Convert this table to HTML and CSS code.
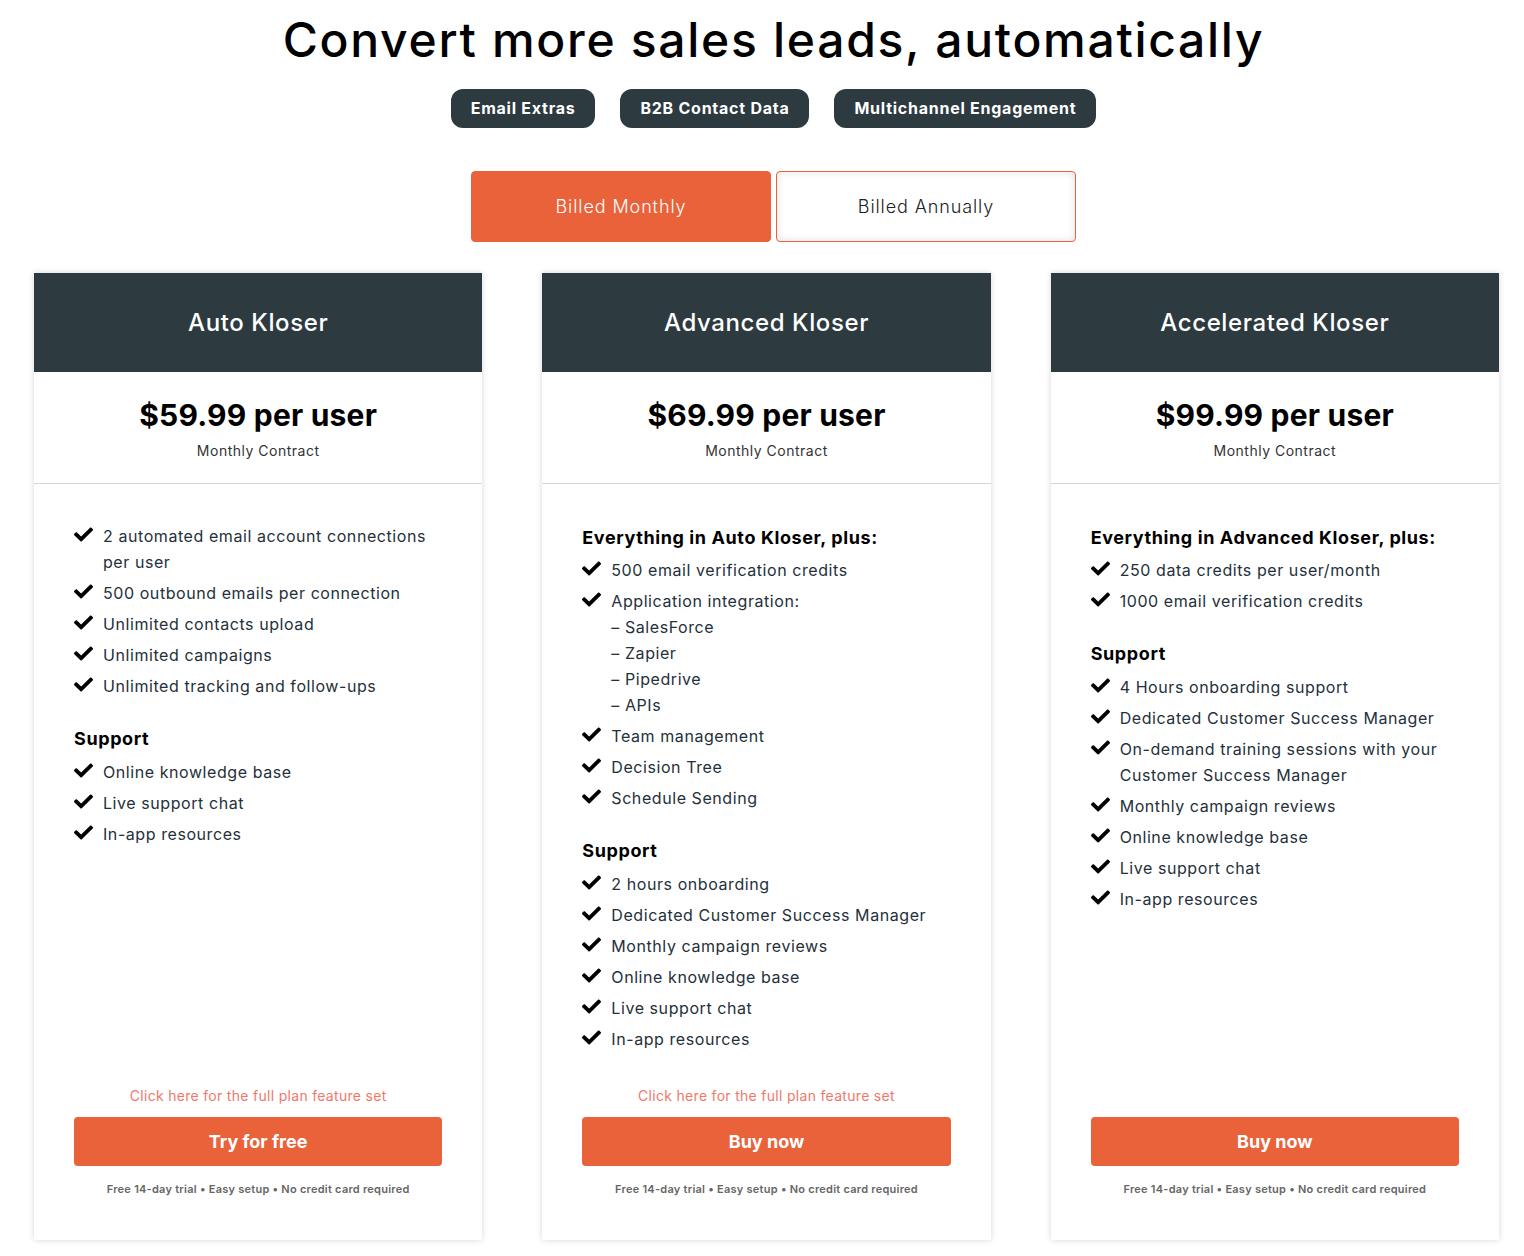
FILE: index.html
```html
<!DOCTYPE html>
<html lang="en">
<head>
<meta charset="utf-8">
<title>Pricing</title>
<link rel="stylesheet" href="styles.css">
</head>
<body>
<header class="hero">
  <h1 class="hero-title">Convert more sales leads, automatically</h1>
  <nav class="pills">
    <a class="pill" href="#">Email Extras</a>
    <a class="pill" href="#">B2B Contact Data</a>
    <a class="pill" href="#">Multichannel Engagement</a>
  </nav>
  <div class="billing-toggle">
    <button class="toggle-btn is-active">Billed Monthly</button>
    <button class="toggle-btn">Billed Annually</button>
  </div>
</header>

<main class="plans">
  <article class="plan">
    <div class="plan-head"><h2 class="plan-name">Auto Kloser</h2></div>
    <div class="plan-price">
      <p class="price">$59.99 per user</p>
      <p class="term">Monthly Contract</p>
    </div>
    <div class="plan-features">
      <ul class="feature-list">
        <li><svg class="check" viewBox="0 0 512 512"><path d="M173.9 439.4l-166.4-166.4c-10-10-10-26.2 0-36.2l36.2-36.2c10-10 26.2-10 36.2 0L192 312.7 432.1 72.6c10-10 26.2-10 36.2 0l36.2 36.2c10 10 10 26.2 0 36.2l-294.4 294.4c-10 10-26.2 10-36.2 0z"/></svg><span>2 automated email account connections per user</span></li>
        <li><svg class="check" viewBox="0 0 512 512"><path d="M173.9 439.4l-166.4-166.4c-10-10-10-26.2 0-36.2l36.2-36.2c10-10 26.2-10 36.2 0L192 312.7 432.1 72.6c10-10 26.2-10 36.2 0l36.2 36.2c10 10 10 26.2 0 36.2l-294.4 294.4c-10 10-26.2 10-36.2 0z"/></svg><span>500 outbound emails per connection</span></li>
        <li><svg class="check" viewBox="0 0 512 512"><path d="M173.9 439.4l-166.4-166.4c-10-10-10-26.2 0-36.2l36.2-36.2c10-10 26.2-10 36.2 0L192 312.7 432.1 72.6c10-10 26.2-10 36.2 0l36.2 36.2c10 10 10 26.2 0 36.2l-294.4 294.4c-10 10-26.2 10-36.2 0z"/></svg><span>Unlimited contacts upload</span></li>
        <li><svg class="check" viewBox="0 0 512 512"><path d="M173.9 439.4l-166.4-166.4c-10-10-10-26.2 0-36.2l36.2-36.2c10-10 26.2-10 36.2 0L192 312.7 432.1 72.6c10-10 26.2-10 36.2 0l36.2 36.2c10 10 10 26.2 0 36.2l-294.4 294.4c-10 10-26.2 10-36.2 0z"/></svg><span>Unlimited campaigns</span></li>
        <li><svg class="check" viewBox="0 0 512 512"><path d="M173.9 439.4l-166.4-166.4c-10-10-10-26.2 0-36.2l36.2-36.2c10-10 26.2-10 36.2 0L192 312.7 432.1 72.6c10-10 26.2-10 36.2 0l36.2 36.2c10 10 10 26.2 0 36.2l-294.4 294.4c-10 10-26.2 10-36.2 0z"/></svg><span>Unlimited tracking and follow-ups</span></li>
      </ul>
      <h3 class="feature-heading">Support</h3>
      <ul class="feature-list">
        <li><svg class="check" viewBox="0 0 512 512"><path d="M173.9 439.4l-166.4-166.4c-10-10-10-26.2 0-36.2l36.2-36.2c10-10 26.2-10 36.2 0L192 312.7 432.1 72.6c10-10 26.2-10 36.2 0l36.2 36.2c10 10 10 26.2 0 36.2l-294.4 294.4c-10 10-26.2 10-36.2 0z"/></svg><span>Online knowledge base</span></li>
        <li><svg class="check" viewBox="0 0 512 512"><path d="M173.9 439.4l-166.4-166.4c-10-10-10-26.2 0-36.2l36.2-36.2c10-10 26.2-10 36.2 0L192 312.7 432.1 72.6c10-10 26.2-10 36.2 0l36.2 36.2c10 10 10 26.2 0 36.2l-294.4 294.4c-10 10-26.2 10-36.2 0z"/></svg><span>Live support chat</span></li>
        <li><svg class="check" viewBox="0 0 512 512"><path d="M173.9 439.4l-166.4-166.4c-10-10-10-26.2 0-36.2l36.2-36.2c10-10 26.2-10 36.2 0L192 312.7 432.1 72.6c10-10 26.2-10 36.2 0l36.2 36.2c10 10 10 26.2 0 36.2l-294.4 294.4c-10 10-26.2 10-36.2 0z"/></svg><span>In-app resources</span></li>
      </ul>
    </div>
    <div class="plan-footer">
      <div class="plan-link-row"><a class="plan-link" href="#">Click here for the full plan feature set</a></div>
      <a class="plan-cta" href="#">Try for free</a>
      <p class="plan-note">Free 14-day trial • Easy setup • No credit card required</p>
    </div>
  </article>

  <article class="plan">
    <div class="plan-head"><h2 class="plan-name">Advanced Kloser</h2></div>
    <div class="plan-price">
      <p class="price">$69.99 per user</p>
      <p class="term">Monthly Contract</p>
    </div>
    <div class="plan-features">
      <h3 class="feature-heading is-first">Everything in Auto Kloser, plus:</h3>
      <ul class="feature-list">
        <li><svg class="check" viewBox="0 0 512 512"><path d="M173.9 439.4l-166.4-166.4c-10-10-10-26.2 0-36.2l36.2-36.2c10-10 26.2-10 36.2 0L192 312.7 432.1 72.6c10-10 26.2-10 36.2 0l36.2 36.2c10 10 10 26.2 0 36.2l-294.4 294.4c-10 10-26.2 10-36.2 0z"/></svg><span>500 email verification credits</span></li>
        <li><svg class="check" viewBox="0 0 512 512"><path d="M173.9 439.4l-166.4-166.4c-10-10-10-26.2 0-36.2l36.2-36.2c10-10 26.2-10 36.2 0L192 312.7 432.1 72.6c10-10 26.2-10 36.2 0l36.2 36.2c10 10 10 26.2 0 36.2l-294.4 294.4c-10 10-26.2 10-36.2 0z"/></svg><span>Application integration:<br>– SalesForce<br>– Zapier<br>– Pipedrive<br>– APIs</span></li>
        <li><svg class="check" viewBox="0 0 512 512"><path d="M173.9 439.4l-166.4-166.4c-10-10-10-26.2 0-36.2l36.2-36.2c10-10 26.2-10 36.2 0L192 312.7 432.1 72.6c10-10 26.2-10 36.2 0l36.2 36.2c10 10 10 26.2 0 36.2l-294.4 294.4c-10 10-26.2 10-36.2 0z"/></svg><span>Team management</span></li>
        <li><svg class="check" viewBox="0 0 512 512"><path d="M173.9 439.4l-166.4-166.4c-10-10-10-26.2 0-36.2l36.2-36.2c10-10 26.2-10 36.2 0L192 312.7 432.1 72.6c10-10 26.2-10 36.2 0l36.2 36.2c10 10 10 26.2 0 36.2l-294.4 294.4c-10 10-26.2 10-36.2 0z"/></svg><span>Decision Tree</span></li>
        <li><svg class="check" viewBox="0 0 512 512"><path d="M173.9 439.4l-166.4-166.4c-10-10-10-26.2 0-36.2l36.2-36.2c10-10 26.2-10 36.2 0L192 312.7 432.1 72.6c10-10 26.2-10 36.2 0l36.2 36.2c10 10 10 26.2 0 36.2l-294.4 294.4c-10 10-26.2 10-36.2 0z"/></svg><span>Schedule Sending</span></li>
      </ul>
      <h3 class="feature-heading">Support</h3>
      <ul class="feature-list">
        <li><svg class="check" viewBox="0 0 512 512"><path d="M173.9 439.4l-166.4-166.4c-10-10-10-26.2 0-36.2l36.2-36.2c10-10 26.2-10 36.2 0L192 312.7 432.1 72.6c10-10 26.2-10 36.2 0l36.2 36.2c10 10 10 26.2 0 36.2l-294.4 294.4c-10 10-26.2 10-36.2 0z"/></svg><span>2 hours onboarding</span></li>
        <li><svg class="check" viewBox="0 0 512 512"><path d="M173.9 439.4l-166.4-166.4c-10-10-10-26.2 0-36.2l36.2-36.2c10-10 26.2-10 36.2 0L192 312.7 432.1 72.6c10-10 26.2-10 36.2 0l36.2 36.2c10 10 10 26.2 0 36.2l-294.4 294.4c-10 10-26.2 10-36.2 0z"/></svg><span>Dedicated Customer Success Manager</span></li>
        <li><svg class="check" viewBox="0 0 512 512"><path d="M173.9 439.4l-166.4-166.4c-10-10-10-26.2 0-36.2l36.2-36.2c10-10 26.2-10 36.2 0L192 312.7 432.1 72.6c10-10 26.2-10 36.2 0l36.2 36.2c10 10 10 26.2 0 36.2l-294.4 294.4c-10 10-26.2 10-36.2 0z"/></svg><span>Monthly campaign reviews</span></li>
        <li><svg class="check" viewBox="0 0 512 512"><path d="M173.9 439.4l-166.4-166.4c-10-10-10-26.2 0-36.2l36.2-36.2c10-10 26.2-10 36.2 0L192 312.7 432.1 72.6c10-10 26.2-10 36.2 0l36.2 36.2c10 10 10 26.2 0 36.2l-294.4 294.4c-10 10-26.2 10-36.2 0z"/></svg><span>Online knowledge base</span></li>
        <li><svg class="check" viewBox="0 0 512 512"><path d="M173.9 439.4l-166.4-166.4c-10-10-10-26.2 0-36.2l36.2-36.2c10-10 26.2-10 36.2 0L192 312.7 432.1 72.6c10-10 26.2-10 36.2 0l36.2 36.2c10 10 10 26.2 0 36.2l-294.4 294.4c-10 10-26.2 10-36.2 0z"/></svg><span>Live support chat</span></li>
        <li><svg class="check" viewBox="0 0 512 512"><path d="M173.9 439.4l-166.4-166.4c-10-10-10-26.2 0-36.2l36.2-36.2c10-10 26.2-10 36.2 0L192 312.7 432.1 72.6c10-10 26.2-10 36.2 0l36.2 36.2c10 10 10 26.2 0 36.2l-294.4 294.4c-10 10-26.2 10-36.2 0z"/></svg><span>In-app resources</span></li>
      </ul>
    </div>
    <div class="plan-footer">
      <div class="plan-link-row"><a class="plan-link" href="#">Click here for the full plan feature set</a></div>
      <a class="plan-cta" href="#">Buy now</a>
      <p class="plan-note">Free 14-day trial • Easy setup • No credit card required</p>
    </div>
  </article>

  <article class="plan">
    <div class="plan-head"><h2 class="plan-name">Accelerated Kloser</h2></div>
    <div class="plan-price">
      <p class="price">$99.99 per user</p>
      <p class="term">Monthly Contract</p>
    </div>
    <div class="plan-features">
      <h3 class="feature-heading is-first">Everything in Advanced Kloser, plus:</h3>
      <ul class="feature-list">
        <li><svg class="check" viewBox="0 0 512 512"><path d="M173.9 439.4l-166.4-166.4c-10-10-10-26.2 0-36.2l36.2-36.2c10-10 26.2-10 36.2 0L192 312.7 432.1 72.6c10-10 26.2-10 36.2 0l36.2 36.2c10 10 10 26.2 0 36.2l-294.4 294.4c-10 10-26.2 10-36.2 0z"/></svg><span>250 data credits per user/month</span></li>
        <li><svg class="check" viewBox="0 0 512 512"><path d="M173.9 439.4l-166.4-166.4c-10-10-10-26.2 0-36.2l36.2-36.2c10-10 26.2-10 36.2 0L192 312.7 432.1 72.6c10-10 26.2-10 36.2 0l36.2 36.2c10 10 10 26.2 0 36.2l-294.4 294.4c-10 10-26.2 10-36.2 0z"/></svg><span>1000 email verification credits</span></li>
      </ul>
      <h3 class="feature-heading">Support</h3>
      <ul class="feature-list">
        <li><svg class="check" viewBox="0 0 512 512"><path d="M173.9 439.4l-166.4-166.4c-10-10-10-26.2 0-36.2l36.2-36.2c10-10 26.2-10 36.2 0L192 312.7 432.1 72.6c10-10 26.2-10 36.2 0l36.2 36.2c10 10 10 26.2 0 36.2l-294.4 294.4c-10 10-26.2 10-36.2 0z"/></svg><span>4 Hours onboarding support</span></li>
        <li><svg class="check" viewBox="0 0 512 512"><path d="M173.9 439.4l-166.4-166.4c-10-10-10-26.2 0-36.2l36.2-36.2c10-10 26.2-10 36.2 0L192 312.7 432.1 72.6c10-10 26.2-10 36.2 0l36.2 36.2c10 10 10 26.2 0 36.2l-294.4 294.4c-10 10-26.2 10-36.2 0z"/></svg><span>Dedicated Customer Success Manager</span></li>
        <li><svg class="check" viewBox="0 0 512 512"><path d="M173.9 439.4l-166.4-166.4c-10-10-10-26.2 0-36.2l36.2-36.2c10-10 26.2-10 36.2 0L192 312.7 432.1 72.6c10-10 26.2-10 36.2 0l36.2 36.2c10 10 10 26.2 0 36.2l-294.4 294.4c-10 10-26.2 10-36.2 0z"/></svg><span>On-demand training sessions with your Customer Success Manager</span></li>
        <li><svg class="check" viewBox="0 0 512 512"><path d="M173.9 439.4l-166.4-166.4c-10-10-10-26.2 0-36.2l36.2-36.2c10-10 26.2-10 36.2 0L192 312.7 432.1 72.6c10-10 26.2-10 36.2 0l36.2 36.2c10 10 10 26.2 0 36.2l-294.4 294.4c-10 10-26.2 10-36.2 0z"/></svg><span>Monthly campaign reviews</span></li>
        <li><svg class="check" viewBox="0 0 512 512"><path d="M173.9 439.4l-166.4-166.4c-10-10-10-26.2 0-36.2l36.2-36.2c10-10 26.2-10 36.2 0L192 312.7 432.1 72.6c10-10 26.2-10 36.2 0l36.2 36.2c10 10 10 26.2 0 36.2l-294.4 294.4c-10 10-26.2 10-36.2 0z"/></svg><span>Online knowledge base</span></li>
        <li><svg class="check" viewBox="0 0 512 512"><path d="M173.9 439.4l-166.4-166.4c-10-10-10-26.2 0-36.2l36.2-36.2c10-10 26.2-10 36.2 0L192 312.7 432.1 72.6c10-10 26.2-10 36.2 0l36.2 36.2c10 10 10 26.2 0 36.2l-294.4 294.4c-10 10-26.2 10-36.2 0z"/></svg><span>Live support chat</span></li>
        <li><svg class="check" viewBox="0 0 512 512"><path d="M173.9 439.4l-166.4-166.4c-10-10-10-26.2 0-36.2l36.2-36.2c10-10 26.2-10 36.2 0L192 312.7 432.1 72.6c10-10 26.2-10 36.2 0l36.2 36.2c10 10 10 26.2 0 36.2l-294.4 294.4c-10 10-26.2 10-36.2 0z"/></svg><span>In-app resources</span></li>
      </ul>
    </div>
    <div class="plan-footer">
      <div class="plan-link-row"></div>
      <a class="plan-cta" href="#">Buy now</a>
      <p class="plan-note">Free 14-day trial • Easy setup • No credit card required</p>
    </div>
  </article>
</main>
</body>
</html>
```

FILE: styles.css
```css
* { box-sizing: border-box; }

body {
  margin: 0;
  background: #ffffff;
  font-family: Inter, "Open Sans", "Liberation Sans", sans-serif;
  color: #1f2a30;
}

.hero {
  display: flex;
  flex-direction: column;
  align-items: center;
  padding: 10px 0 0 23px;
}

.hero-title {
  margin: 0;
  font-size: 48px;
  line-height: 60px;
  font-weight: 500;
  color: #000;
  letter-spacing: 1.7px;
}

.pills {
  display: flex;
  gap: 25px;
  margin-top: 19px;
}

.pill {
  display: flex;
  align-items: center;
  height: 39px;
  padding: 0 20px 1px;
  border-radius: 12px;
  background: #2d3a40;
  color: #fff;
  font-size: 16px;
  font-weight: 700;
  letter-spacing: 0.75px;
  text-decoration: none;
}

.billing-toggle {
  display: flex;
  gap: 5px;
  margin-top: 43px;
}

.toggle-btn {
  width: 300px;
  height: 71px;
  border: 1px solid #e9623a;
  border-radius: 4px;
  background: #fff;
  box-shadow: inset 0 0 8px rgba(0, 0, 0, 0.12);
  font-family: inherit;
  font-size: 18px;
  font-weight: 300;
  color: #222;
  letter-spacing: 0.9px;
}

.toggle-btn.is-active {
  background: #e9623a;
  color: #fff;
  box-shadow: none;
}

.plans {
  display: grid;
  grid-template-columns: repeat(3, 1fr);
  gap: 60px;
  margin: 31px 25px 16px 34px;
}

.plan {
  display: flex;
  flex-direction: column;
  background: #fff;
  box-shadow: 0 0 6px rgba(0, 0, 0, 0.16);
}

.plan-head {
  display: flex;
  align-items: center;
  justify-content: center;
  height: 99px;
  background: #2d3a40;
}

.plan-name {
  margin: 0;
  font-size: 24px;
  font-weight: 500;
  color: #fff;
  letter-spacing: 0.6px;
}

.plan-price {
  padding: 25px 0 22px;
  border-bottom: 1px solid #d6d6d6;
  text-align: center;
}

.price {
  margin: 0;
  font-size: 30px;
  line-height: 36px;
  font-weight: 700;
  color: #000;
  letter-spacing: 0.2px;
}

.term {
  margin: 8px 0 0;
  font-size: 14px;
  line-height: 20px;
  color: #333;
  letter-spacing: 0.5px;
}

.plan-features {
  flex: 1;
  padding: 39px 40px 33px;
}

.feature-list {
  list-style: none;
  margin: 0;
  padding: 0;
}

.feature-list li {
  display: flex;
  align-items: flex-start;
  gap: 10px;
  font-size: 16px;
  line-height: 26px;
  color: #24303a;
  letter-spacing: 0.57px;
}

.feature-list li + li { margin-top: 5px; }

.check {
  flex: none;
  width: 19px;
  height: 19px;
  margin-top: 2px;
  fill: #000;
}

.feature-heading {
  margin: 27px 0 7px;
  font-size: 18px;
  line-height: 26px;
  font-weight: 700;
  color: #000;
  letter-spacing: 0.6px;
}

.feature-heading.is-first { margin: 2px 0 6px; }

.plan-footer {
  display: flex;
  flex-direction: column;
  align-items: stretch;
  padding: 0 40px 43px;
  text-align: center;
}

.plan-link-row { height: 20px; }

.plan-link {
  font-size: 14px;
  line-height: 20px;
  color: #f0786a;
  letter-spacing: 0.3px;
  text-decoration: none;
}

.plan-cta {
  display: flex;
  align-items: center;
  justify-content: center;
  height: 49px;
  margin-top: 12px;
  border-radius: 4px;
  background: #e9623a;
  color: #fff;
  font-size: 18px;
  font-weight: 700;
  text-decoration: none;
}

.plan-note {
  margin: 15px 0 0;
  font-size: 11px;
  line-height: 16px;
  font-weight: 600;
  color: #666;
  letter-spacing: 0.25px;
}
```
